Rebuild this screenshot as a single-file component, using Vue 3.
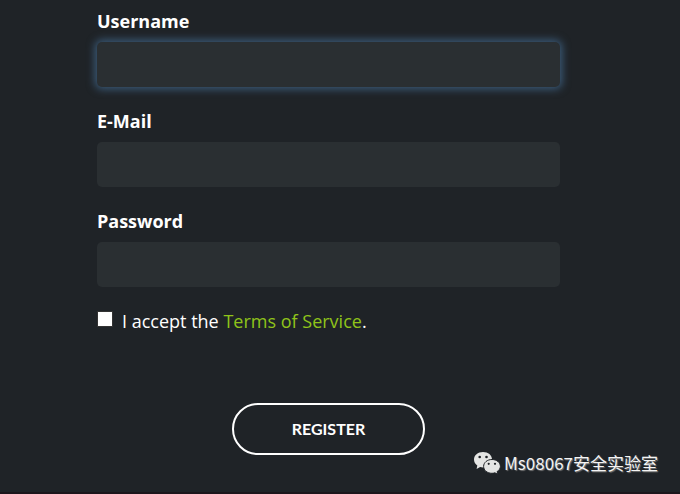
<script setup>
import { ref, onMounted } from 'vue'

const fields = [
  { id: 'username', label: 'Username', type: 'text' },
  { id: 'email', label: 'E-Mail', type: 'email' },
  { id: 'password', label: 'Password', type: 'password' },
]
const values = ref({ username: '', email: '', password: '' })
const accepted = ref(false)
const form = ref(null)

onMounted(() => form.value.querySelector('#username').focus())
</script>

<template>
  <main class="page">
    <form ref="form" class="form" @submit.prevent>
      <div v-for="field in fields" :key="field.id" class="field">
        <label class="label" :for="field.id">{{ field.label }}</label>
        <input :id="field.id" v-model="values[field.id]" class="input" :type="field.type" />
      </div>
      <div class="terms">
        <input id="accept" v-model="accepted" class="checkbox" type="checkbox" />
        <label for="accept">I accept the <a class="link" href="#terms">Terms of Service</a>.</label>
      </div>
      <button class="register" type="submit">REGISTER</button>
    </form>
    <div class="watermark">
      <svg class="wechat" viewBox="0 0 28 24" aria-hidden="true">
        <path
          class="bubble"
          d="M10 1C4.700 1 1 4.300 1 8.600c0 2.500 1.300 4.600 3.300 6L3.600 18l3.500-2c1 .3 1.900.4 2.900.4 5.200 0 9-3.200 9-7.800S15.200 1 10 1z"
        />
        <path
          class="bubble front"
          d="M19 8.500c-4.700 0-8.400 3-8.400 6.900s3.700 6.900 8.400 6.900c1 0 2-.2 2.900-.5l3 1.500-.8-2.700c1.900-1.300 3.300-3.100 3.300-5.200 0-3.900-3.700-6.900-8.400-6.900z"
        />
        <circle class="eye" cx="6.700" cy="6" r="1.300" />
        <circle class="eye" cx="13.500" cy="6" r="1.300" />
        <circle class="eye" cx="15.700" cy="12.800" r="1.100" />
        <circle class="eye" cx="22" cy="12.800" r="1.100" />
      </svg>
      <span>Ms08067安全实验室</span>
    </div>
  </main>
</template>

<style>
body {
  background: #1f2327;
}
</style>

<style scoped>
.page {
  position: relative;
  box-sizing: border-box;
  min-height: 100vh;
  padding: 6px 120px 36px 97px;
  border-bottom: 2px solid #1c161c;
  background: #1f2327;
  color: #fff;
  font-family: 'Open Sans', 'Noto Sans', sans-serif;
  font-size: 18px;
  line-height: 30px;
}

.form {
  display: flex;
  flex-direction: column;
}

.field {
  display: flex;
  flex-direction: column;
  gap: 6px;
  margin-bottom: 19px;
}

.label {
  font-weight: 700;
}

.input {
  box-sizing: border-box;
  width: 100%;
  height: 45px;
  padding: 0 16px;
  border: 0;
  border-radius: 5px;
  outline: none;
  background: #2a2f32;
  caret-color: transparent;
  color: #fff;
  font: inherit;
}

.input:focus {
  box-shadow: 0 0 9px 2px #3c5d7c;
}

.terms {
  display: flex;
  align-items: flex-start;
  gap: 9px;
}

.checkbox {
  appearance: none;
  box-sizing: border-box;
  width: 16px;
  height: 16px;
  margin: 5px 0 0;
  border: 1px solid #333;
  background: #fff;
}

.checkbox:checked {
  background: #8c1;
}

.link {
  color: #8fc31a;
  text-decoration: none;
}

.register {
  align-self: center;
  height: 52px;
  margin-top: 67px;
  padding: 0 58px;
  border: 2px solid #fff;
  border-radius: 26px;
  background: transparent;
  color: #fff;
  font: 700 16px/20px 'Lato', 'Open Sans', sans-serif;
}

.watermark {
  position: absolute;
  right: 22px;
  bottom: 17px;
  display: flex;
  align-items: center;
  gap: 3px;
  color: #f4f4f4;
  font: 17px/24px 'Noto Sans CJK SC', sans-serif;
  text-shadow: 1px 1px 1px #777;
}

.wechat {
  width: 28px;
  height: 24px;
}

.bubble {
  fill: #e4e5e4;
}

.front {
  stroke: #1f2327;
  stroke-width: 1;
}

.eye {
  fill: #1f2327;
}
</style>
